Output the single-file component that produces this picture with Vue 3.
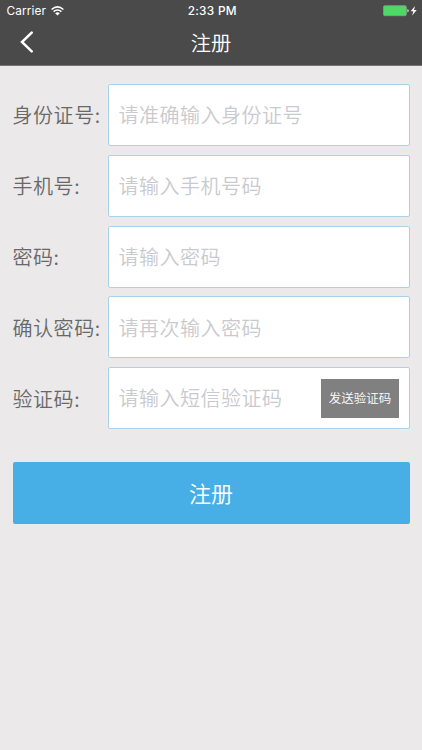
<script setup>
const fields = [
  { label: '身份证号:', placeholder: '请准确输入身份证号', type: 'text' },
  { label: '手机号:', placeholder: '请输入手机号码', type: 'tel' },
  { label: '密码:', placeholder: '请输入密码', type: 'password' },
  { label: '确认密码:', placeholder: '请再次输入密码', type: 'password' },
  { label: '验证码:', placeholder: '请输入短信验证码', type: 'text', action: '发送验证码' },
]
</script>

<template>
  <div class="screen">
    <header>
      <div class="status">
        <div class="carrier">
          <span>Carrier</span>
          <svg width="13" height="10" viewBox="0 0 13 10" fill="none" stroke="#fff" stroke-width="1.6">
            <path d="M.6 3.5Q6.5-1.7 12.4 3.5M2.6 5.7Q6.5 2.3 10.4 5.7" />
            <path d="M4.2 7.2Q6.5 5.2 8.8 7.2L6.5 9.6Z" fill="#fff" stroke="none" />
          </svg>
        </div>
        <span class="time">2:33 PM</span>
        <div class="power">
          <svg width="35" height="12" viewBox="0 0 35 12">
            <rect x=".4" y=".7" width="23" height="10" rx="1.4" fill="#4cd964" stroke="#8a998b" stroke-width=".8" />
            <path d="M24.3 4Q25.8 4.3 25.8 5.7T24.3 7.4Z" fill="#c5d3c7" />
            <path d="M32 1L27.7 6.3H30.3L29.2 10.5L33.7 4.9H31Z" fill="#fff" />
          </svg>
        </div>
      </div>
      <nav>
        <button class="back" aria-label="返回">
          <svg width="14" height="22" viewBox="0 0 14 22" fill="none" stroke="#fff" stroke-width="2.5" stroke-linecap="round">
            <path d="M11.7 1.7L2 11L11.7 20.3" />
          </svg>
        </button>
        <h1>注册</h1>
      </nav>
    </header>
    <form @submit.prevent>
      <div v-for="field in fields" :key="field.label" class="row">
        <label>{{ field.label }}</label>
        <div class="box">
          <input :type="field.type" :placeholder="field.placeholder" />
          <button v-if="field.action" type="button" class="send">{{ field.action }}</button>
        </div>
      </div>
      <button class="submit">注册</button>
    </form>
  </div>
</template>

<style>
body {
  background: #ebe9ea;
}
</style>

<style scoped>
.screen {
  height: 750px;
  background: #ebe9ea;
  font-family: "Noto Sans CJK SC", sans-serif;
  font-weight: 350;
}
.screen * {
  box-sizing: border-box;
}
button {
  border: 0;
  padding: 0;
  color: #fff;
  font: inherit;
}
header {
  height: 66px;
  background: #4a4a4b;
  border-bottom: 1px solid #747474;
  color: #fff;
}
.status {
  display: grid;
  grid-template-columns: 1fr auto 1fr;
  align-items: center;
  height: 22px;
  padding: 0 4px 0 6.5px;
  font-family: Inter, sans-serif;
  font-size: 11.8px;
  font-weight: 400;
}
.carrier {
  display: flex;
  align-items: center;
  gap: 5px;
  letter-spacing: .12px;
}
.time {
  font-weight: 500;
  letter-spacing: .3px;
}
.power {
  display: flex;
  justify-content: flex-end;
}
nav {
  display: grid;
  grid-template-columns: 40px 1fr 40px;
  align-items: center;
  height: 40px;
}
.back {
  display: flex;
  padding-left: 20px;
  background: none;
}
h1 {
  margin: 0;
  text-align: center;
  font-size: 20.3px;
  font-weight: 350;
  line-height: 40px;
}
form {
  padding: 18px 12.5px 0;
}
.row {
  display: flex;
  align-items: center;
  height: 62px;
  margin-bottom: 8.8px;
}
label {
  width: 95.5px;
  flex: none;
  padding-bottom: .2px;
  color: #686868;
  font-size: 20px;
  letter-spacing: .55px;
  white-space: nowrap;
}
.box {
  display: flex;
  flex: 1;
  align-items: center;
  min-width: 0;
  height: 62px;
  padding: 0 9.5px;
  border: 1px solid #a9d3ec;
  border-radius: 2px;
  background: #fff;
}
input {
  flex: 1;
  width: 0;
  min-width: 0;
  height: 50px;
  padding: 0 0 .4px;
  border: 0;
  outline: 0;
  background: none;
  font: inherit;
  font-size: 20px;
  letter-spacing: .5px;
}
input::placeholder {
  color: #cacace;
  opacity: 1;
}
.send {
  flex: none;
  width: 78px;
  height: 39px;
  padding-bottom: 1px;
  background: #808080;
  font-size: 12.5px;
}
.submit {
  display: block;
  width: 100%;
  height: 62px;
  margin-top: 33px;
  padding-bottom: 3px;
  border-radius: 2px;
  background: #48afe6;
  font-size: 22px;
}
</style>
